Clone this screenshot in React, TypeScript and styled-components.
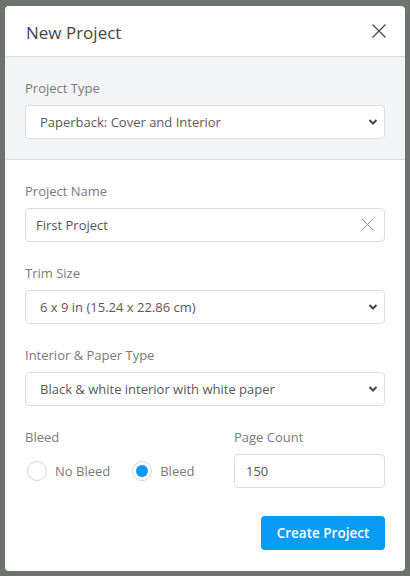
import React from 'react';
import styled, { createGlobalStyle } from 'styled-components';

const GlobalStyle = createGlobalStyle`
  html, body {
    margin: 0;
    padding: 0;
    background: #6f7370;
  }
  body {
    font-family: "Open Sans", "Liberation Sans", sans-serif;
  }
  * { box-sizing: border-box; }
`;

const Backdrop = styled.div`
  padding: 6px 5px 5px 5px;
  min-height: 576px;
`;

const Modal = styled.div`
  width: 400px;
  height: 565px;
  background: #fff;
  border-radius: 4px;
  overflow: hidden;
  display: flex;
  flex-direction: column;
`;

const Header = styled.div`
  height: 51px;
  padding: 0 18px 0 21px;
  display: flex;
  align-items: center;
  justify-content: space-between;
  border-bottom: 1px solid #dcdfe3;
`;

const Title = styled.h2`
  margin: 0;
  font-size: 17px;
  font-weight: 400;
  color: #454545;
  padding-top: 2px;
`;

const CloseButton = styled.button`
  border: 0;
  background: none;
  padding: 0;
  width: 16px;
  height: 16px;
  display: flex;
  cursor: pointer;
`;

const Section = styled.div<{ $muted?: boolean }>`
  padding: 22px 20px 20px 20px;
  background: ${(p) => (p.$muted ? '#f3f4f6' : '#fff')};
  border-bottom: ${(p) => (p.$muted ? '1px solid #dcdfe3' : '0')};
  display: flex;
  flex-direction: column;
  gap: 22px;
`;

const Field = styled.div`
  display: flex;
  flex-direction: column;
  gap: 8px;
`;

const Label = styled.label`
  font-size: 13px;
  line-height: 18px;
  color: #7a7a7a;
`;

const SelectWrap = styled.div`
  position: relative;
  height: 34px;

  svg {
    position: absolute;
    right: 7px;
    top: 13px;
    pointer-events: none;
  }
`;

const Select = styled.select`
  appearance: none;
  width: 100%;
  height: 34px;
  border: 1px solid #dadde1;
  border-radius: 4px;
  background: #fff;
  padding: 0 30px 0 14px;
  font-family: inherit;
  font-size: 13px;
  color: #595959;
  outline: none;
`;

const InputWrap = styled.div`
  position: relative;
  height: 34px;
`;

const Input = styled.input<{ $inset?: number }>`
  width: 100%;
  height: 34px;
  border: 1px solid #dadde1;
  border-radius: 4px;
  background: #fff;
  padding: 0 30px 0 ${(p) => p.$inset ?? 10}px;
  font-family: inherit;
  font-size: 13px;
  color: #555;
  outline: none;
`;

const ClearIcon = styled.span`
  position: absolute;
  right: 11px;
  top: 10px;
  display: flex;
`;

const Row = styled.div`
  display: grid;
  grid-template-columns: 209px 1fr;
`;

const Radios = styled.div`
  display: flex;
  align-items: center;
  height: 34px;
  padding-left: 2px;
  gap: 22px;
`;

const RadioOption = styled.label`
  display: flex;
  align-items: center;
  gap: 8px;
  font-size: 13px;
  color: #7a7a7a;
  cursor: pointer;
`;

const RadioCircle = styled.span<{ $checked?: boolean }>`
  width: 20px;
  height: 20px;
  border-radius: 50%;
  border: 1px solid #d4d6d9;
  background: #fff;
  display: flex;
  align-items: center;
  justify-content: center;

  &::after {
    content: '';
    width: 12px;
    height: 12px;
    border-radius: 50%;
    background: ${(p) => (p.$checked ? '#0a97f7' : 'transparent')};
  }
`;

const Footer = styled.div`
  display: flex;
  justify-content: flex-end;
  padding: 8px 20px 0 20px;
`;

const PrimaryButton = styled.button`
  width: 124px;
  height: 34px;
  border: 0;
  border-radius: 4px;
  background: #0a9bf6;
  color: #fff;
  font-family: "Open Sans", "Liberation Sans", sans-serif;
  font-weight: 600;
  font-size: 13.5px;
  cursor: pointer;
`;

const Chevron = () => (
  <svg width="10" height="8" viewBox="0 0 10 8">
    <path d="M1.5 2 L5 5.5 L8.5 2" fill="none" stroke="#444" strokeWidth="2" />
  </svg>
);

const App: React.FC = () => {
  return (
    <Backdrop>
      <GlobalStyle />
      <Modal>
        <Header>
          <Title>New Project</Title>
          <CloseButton aria-label="Close">
            <svg width="16" height="16" viewBox="0 0 16 16">
              <path d="M1.5 1.5 L14.5 14.5 M14.5 1.5 L1.5 14.5" stroke="#4a4a4a" strokeWidth="1.3" />
            </svg>
          </CloseButton>
        </Header>

        <Section $muted>
          <Field>
            <Label>Project Type</Label>
            <SelectWrap>
              <Select defaultValue="pb">
                <option value="pb">Paperback: Cover and Interior</option>
              </Select>
              <Chevron />
            </SelectWrap>
          </Field>
        </Section>

        <Section>
          <Field>
            <Label>Project Name</Label>
            <InputWrap>
              <Input defaultValue="First Project" />
              <ClearIcon>
                <svg width="13" height="13" viewBox="0 0 13 13">
                  <path d="M1 1 L12 12 M12 1 L1 12" stroke="#8a8a8a" strokeWidth="1" />
                </svg>
              </ClearIcon>
            </InputWrap>
          </Field>

          <Field>
            <Label>Trim Size</Label>
            <SelectWrap>
              <Select defaultValue="6x9">
                <option value="6x9">6 x 9 in (15.24 x 22.86 cm)</option>
              </Select>
              <Chevron />
            </SelectWrap>
          </Field>

          <Field>
            <Label>Interior &amp; Paper Type</Label>
            <SelectWrap>
              <Select defaultValue="bw">
                <option value="bw">Black &amp; white interior with white paper</option>
              </Select>
              <Chevron />
            </SelectWrap>
          </Field>

          <Row>
            <Field>
              <Label>Bleed</Label>
              <Radios>
                <RadioOption>
                  <RadioCircle />
                  No Bleed
                </RadioOption>
                <RadioOption>
                  <RadioCircle $checked />
                  Bleed
                </RadioOption>
              </Radios>
            </Field>
            <Field>
              <Label>Page Count</Label>
              <Input defaultValue="150" $inset={11} />
            </Field>
          </Row>
        </Section>

        <Footer>
          <PrimaryButton>Create Project</PrimaryButton>
        </Footer>
      </Modal>
    </Backdrop>
  );
};

export default App;
